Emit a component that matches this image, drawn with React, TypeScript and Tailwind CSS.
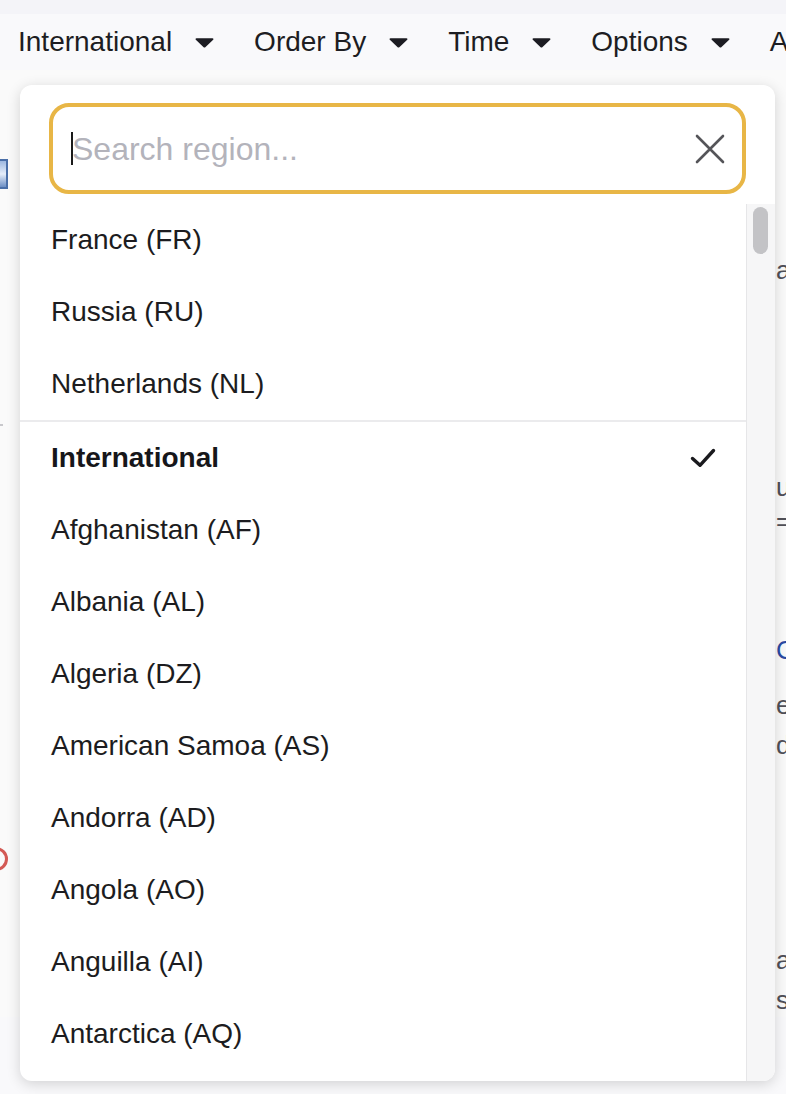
import { useState } from "react";

const PINNED = ["France (FR)", "Russia (RU)", "Netherlands (NL)"];

const REGIONS = [
  "Afghanistan (AF)",
  "Albania (AL)",
  "Algeria (DZ)",
  "American Samoa (AS)",
  "Andorra (AD)",
  "Angola (AO)",
  "Anguilla (AI)",
  "Antarctica (AQ)",
  "Antigua and Barbuda (AG)",
  "Argentina (AR)",
];

const NAV = ["International", "Order By", "Time", "Options", "Advanced"];

function Caret() {
  return (
    <svg width="19" height="11" viewBox="0 0 19 11" aria-hidden="true">
      <path d="M1.5 1.2h16c.9 0 1.3 1 .7 1.6l-7.9 7.4c-.5.5-1.2.5-1.7 0L.8 2.8C.2 2.2.6 1.2 1.5 1.2z" fill="#1c1c22" />
    </svg>
  );
}

function CloseIcon() {
  return (
    <svg width="30" height="30" viewBox="0 0 30 30" aria-hidden="true">
      <path d="M2 2l26 26M28 2L2 28" stroke="#555559" strokeWidth="2.6" strokeLinecap="round" />
    </svg>
  );
}

function CheckIcon() {
  return (
    <svg width="26" height="20" viewBox="0 0 26 20" aria-hidden="true">
      <path d="M2.5 10.5l7.5 6.8L23.5 2.5" stroke="#1a1a1e" strokeWidth="3.4" fill="none" strokeLinecap="round" strokeLinejoin="round" />
    </svg>
  );
}

function Row({ label, selected = false }: { label: string; selected?: boolean }) {
  return (
    <div className="flex h-[72px] shrink-0 items-center justify-between pl-[31px] pr-[30px]">
      <span className={selected ? "font-bold text-[#16161a]" : "text-[#1c1c20]"}>{label}</span>
      {selected && <CheckIcon />}
    </div>
  );
}

export default function App() {
  const [query, setQuery] = useState("");

  return (
    <div className="relative h-[1094px] w-full overflow-hidden bg-[#f9f9fb] font-['Liberation_Sans',Arial,sans-serif] text-[28px]">
      {/* page behind the dropdown */}
      <div className="h-[14px] bg-[#f4f4f8]" />
      <nav className="flex h-[56px] items-center whitespace-nowrap pl-[18px] text-[#1d1d22]">
        {NAV.map((item, i) => (
          <div key={item} className={`flex shrink-0 items-center gap-[23px] ${i > 0 ? "ml-[40px]" : ""}`}>
            <span>{item}</span>
            <Caret />
          </div>
        ))}
      </nav>
      <div className="flex justify-between bg-[#fafafa] pt-[15px]">
        <div className="flex w-[10px] flex-col">
          <div className="mt-[74px] h-[30px] w-[8px] border-y-2 border-r-2 border-[#4a6fa8] bg-gradient-to-b from-[#9db8e0] via-[#e6eefa] to-[#6d8fc4]" />
          <div className="mt-[235px] h-[2px] w-[3px] bg-[#c8c8cc]" />
          <div className="-ml-[16px] mt-[421px] h-[24px] w-[24px] rounded-full border-[3px] border-[#d35a55]" />
        </div>
        <div className="flex w-[10px] flex-col overflow-hidden whitespace-nowrap text-[26px] leading-[34px] text-[#505058]">
          <span className="mt-[168px]">a</span>
          <span className="mt-[183px]">u</span>
          <span>=</span>
          <span className="mt-[95px] text-[#2b4aa3]">C</span>
          <span className="mt-[21px]">e</span>
          <span className="mt-[6px]">d</span>
          <span className="mt-[181px]">a</span>
          <span className="mt-[6px]">s</span>
        </div>
      </div>

      {/* dropdown panel */}
      <div className="absolute left-[20px] top-[85px] flex h-[996px] w-[755px] flex-col overflow-hidden rounded-[12px] bg-white shadow-[0_3px_14px_rgba(0,0,0,0.16)]">
        <div className="px-[29px] pb-[10px] pt-[18px]">
          <div className="flex h-[91px] items-center rounded-[20px] border-4 border-[#e8b646] pl-[18px] pr-[17px]">
            <span className="h-[33px] w-[2px] shrink-0 bg-[#1a1a1a]" />
            <input
              value={query}
              onChange={(e) => setQuery(e.target.value)}
              placeholder="Search region..."
              className="-ml-px min-w-0 flex-1 bg-transparent text-[32px] text-[#1a1a1a] caret-transparent outline-none placeholder:text-[#b3b3bb]"
            />
            <CloseIcon />
          </div>
        </div>
        <div className="flex min-h-0 flex-1">
          <div className="flex min-w-0 flex-1 flex-col overflow-hidden">
            {PINNED.map((r) => (
              <Row key={r} label={r} />
            ))}
            <div className="h-[2px] shrink-0 bg-[#ebebed]" />
            <Row label="International" selected />
            {REGIONS.map((r) => (
              <Row key={r} label={r} />
            ))}
          </div>
          <div className="w-[29px] shrink-0 border-l border-[#e6e6e8] bg-[#f6f6f7] pl-[6px] pt-[3px]">
            <div className="h-[47px] w-[15px] rounded-full bg-[#c3c3c6]" />
          </div>
        </div>
      </div>
    </div>
  );
}
